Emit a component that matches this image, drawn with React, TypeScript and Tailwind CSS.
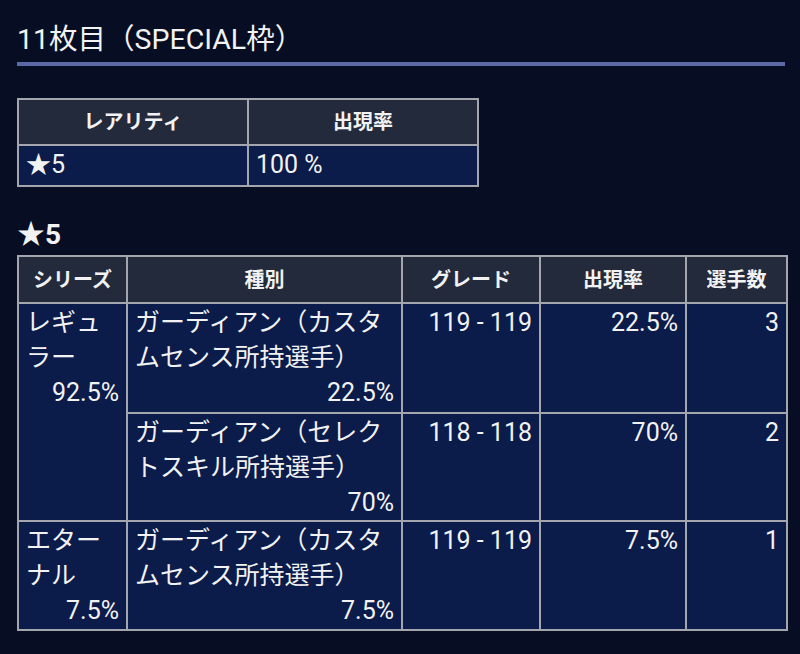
import React from "react";

const border = "border-2 border-[#a4a6ae]";
const thBase = `${border} bg-[#222a3b] text-[20px] font-bold text-center align-middle p-0`;
const td = `${border} bg-[#0b1b4a] align-top text-[25px] leading-[35px] px-[7px] pt-[1px] pb-0`;

export default function App() {
  return (
    <div
      className="min-h-[654px] w-[800px] bg-[#070e24] text-[#f2f2f2] px-[17px] pt-[20px]"
      style={{ fontFamily: "Roboto, 'Noto Sans CJK JP', sans-serif" }}
    >
      <h1 className="text-[28.5px] leading-[40px] font-normal">11枚目（SPECIAL枠）</h1>
      <div className="mt-[2px] h-[4px] w-[768px] bg-[#5b6aa6]" />

      <table className="mt-[32px] border-collapse table-fixed w-[460px]">
        <colgroup>
          <col className="w-[230px]" />
          <col className="w-[230px]" />
        </colgroup>
        <thead>
          <tr>
            <th className={`${thBase} h-[46px]`}>レアリティ</th>
            <th className={`${thBase} h-[46px]`}>出現率</th>
          </tr>
        </thead>
        <tbody>
          <tr>
            <td className={`${td} h-[41px] py-0 align-middle`}>★5</td>
            <td className={`${td} h-[41px] py-0 align-middle`}>100 %</td>
          </tr>
        </tbody>
      </table>

      <h2 className="mt-[30px] text-[28px] leading-[36px] font-bold">★5</h2>

      <table className="mt-[2px] border-collapse table-fixed w-[769px]">
        <colgroup>
          <col className="w-[109px]" />
          <col className="w-[275px]" />
          <col className="w-[138px]" />
          <col className="w-[146px]" />
          <col className="w-[101px]" />
        </colgroup>
        <thead>
          <tr>
            <th className={`${thBase} h-[47px]`}>シリーズ</th>
            <th className={`${thBase} h-[47px]`}>種別</th>
            <th className={`${thBase} h-[47px]`}>グレード</th>
            <th className={`${thBase} h-[47px]`}>出現率</th>
            <th className={`${thBase} h-[47px]`}>選手数</th>
          </tr>
        </thead>
        <tbody>
          <tr className="h-[110px]">
            <td className={td} rowSpan={2}>
              <div>レギュ</div>
              <div>ラー</div>
              <div className="text-right">92.5%</div>
            </td>
            <td className={td}>
              <div>ガーディアン（カスタ</div>
              <div>ムセンス所持選手）</div>
              <div className="text-right">22.5%</div>
            </td>
            <td className={`${td} text-right`}>119 - 119</td>
            <td className={`${td} text-right`}>22.5%</td>
            <td className={`${td} text-right`}>3</td>
          </tr>
          <tr className="h-[108px]">
            <td className={td}>
              <div>ガーディアン（セレク</div>
              <div>トスキル所持選手）</div>
              <div className="text-right">70%</div>
            </td>
            <td className={`${td} text-right`}>118 - 118</td>
            <td className={`${td} text-right`}>70%</td>
            <td className={`${td} text-right`}>2</td>
          </tr>
          <tr className="h-[109px]">
            <td className={td}>
              <div>エター</div>
              <div>ナル</div>
              <div className="text-right">7.5%</div>
            </td>
            <td className={td}>
              <div>ガーディアン（カスタ</div>
              <div>ムセンス所持選手）</div>
              <div className="text-right">7.5%</div>
            </td>
            <td className={`${td} text-right`}>119 - 119</td>
            <td className={`${td} text-right`}>7.5%</td>
            <td className={`${td} text-right`}>1</td>
          </tr>
        </tbody>
      </table>
    </div>
  );
}
